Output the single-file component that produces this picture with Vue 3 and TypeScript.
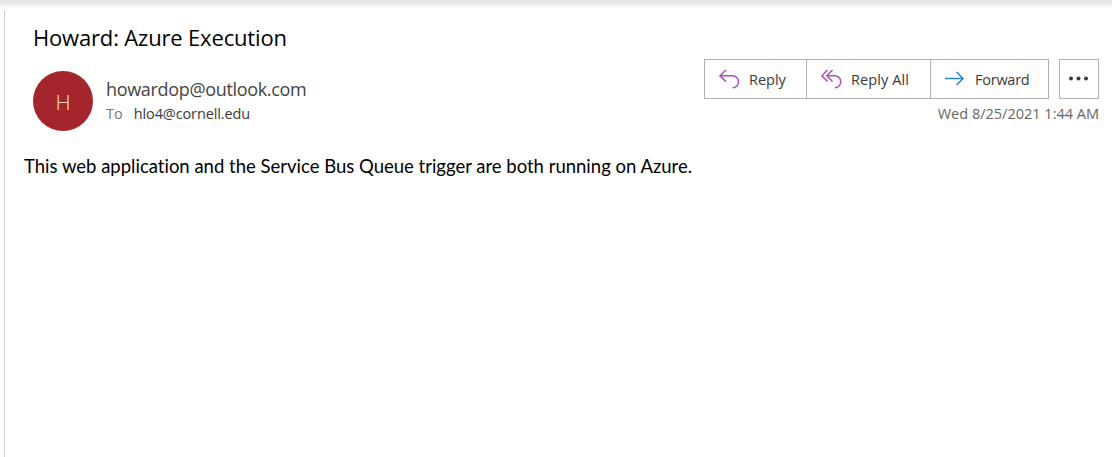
<script setup lang="ts">
interface MailAction {
  id: string
  label: string
  paths: string[]
}

const actions: MailAction[] = [
  { id: 'reply', label: 'Reply', paths: ['M7 1 L1 6.8 L7 12.6', 'M1 6.8 H13.5 A6 6 0 0 1 13.5 18.8'] },
  {
    id: 'reply-all',
    label: 'Reply All',
    paths: ['M6.5 1 L.9 6.8 L6.5 12.6', 'M11.5 1 L5.9 6.8 L11.5 12.6', 'M6 6.8 H13.8 A6 6 0 0 1 13.8 18.8'],
  },
  { id: 'forward', label: 'Forward', paths: ['M0 9.5 H18', 'M11.5 3 L18 9.5 L11.5 16'] },
]

const mail = {
  subject: 'Howard: Azure Execution',
  sender: 'howardop@outlook.com',
  recipient: 'hlo4@cornell.edu',
  sent: 'Wed 8/25/2021 1:44 AM',
  body: 'This web application and the Service Bus Queue trigger are both running on Azure.',
}
</script>

<template>
  <div class="window">
    <div class="shade"></div>
    <main class="pane">
      <h1 class="subject"><span>{{ mail.subject }}</span></h1>
      <header class="header">
        <div class="avatar"><span>H</span></div>
        <div class="people">
          <div class="sender"><span>{{ mail.sender }}</span></div>
          <div class="recipient"><span class="to">To</span><span class="address">{{ mail.recipient }}</span></div>
        </div>
        <div class="side">
          <div class="toolbar">
            <div class="group">
              <button v-for="a in actions" :key="a.id" type="button" class="action" :class="a.id">
                <svg width="21" height="20" viewBox="0 0 21 20">
                  <path v-for="d in a.paths" :key="d" :d="d" />
                </svg>
                <span>{{ a.label }}</span>
              </button>
            </div>
            <button type="button" class="more" aria-label="More actions">
              <svg width="20" height="6" viewBox="0 0 20 6">
                <circle cx="2" cy="2.5" r="2" /><circle cx="9.5" cy="2.5" r="2" /><circle cx="17" cy="2.5" r="2" />
              </svg>
            </button>
          </div>
          <div class="date"><span>{{ mail.sent }}</span></div>
        </div>
      </header>
      <p class="body"><span>{{ mail.body }}</span></p>
    </main>
  </div>
</template>

<style>
body {
  margin: 0;
  background: #fff;
}
</style>

<style scoped>
.window {
  display: flex;
  flex-direction: column;
  height: 457px;
  overflow: hidden;
  background: #fff;
  font-family: "Open Sans", "Noto Sans", sans-serif;
  white-space: nowrap;
}
.shade {
  flex: none;
  height: 10px;
  background: linear-gradient(#e6e6e6 0, #e9e9e9 30%, #fff 90%);
}
.pane {
  flex: 1;
  margin-left: 4px;
  border-left: 1px solid #d2d0ce;
}
.subject {
  margin: 10px 0 0 28px;
  height: 34px;
  line-height: 34px;
  font-size: 22px;
  font-weight: 400;
  color: #000;
  letter-spacing: -0.17px;
}
.header {
  display: flex;
  margin: 5px 13px 0 28px;
  height: 76px;
}
.avatar {
  width: 60px;
  height: 60px;
  margin-top: 12px;
  border-radius: 50%;
  background: #a4262c;
  color: #f6dfc4;
  font-size: 21px;
  font-weight: 300;
  line-height: 62px;
  text-align: center;
}
.people {
  margin: 18px 0 0 13px;
}
.sender {
  height: 25px;
  line-height: 25px;
  font-size: 18px;
  letter-spacing: -0.33px;
  color: #444;
}
.recipient {
  display: flex;
  gap: 11px;
  height: 22px;
  line-height: 23px;
  font-size: 14.5px;
}
.to {
  color: #767676;
}
.address {
  letter-spacing: -0.12px;
  color: #3b3a39;
}
.side {
  margin-left: auto;
}
.toolbar {
  display: flex;
  gap: 10px;
}
.group {
  display: flex;
  box-sizing: border-box;
  height: 40px;
  border: 1px solid #b3b0ad;
}
button {
  margin: 0;
  padding: 0;
  background: #fff;
  font: inherit;
}
.action {
  display: flex;
  box-sizing: border-box;
  align-items: center;
  border: 0;
  font-size: 14.5px;
  color: #3b3a39;
}
.action + .action {
  border-left: 1px solid #b3b0ad;
}
.action svg {
  flex: none;
  margin-right: 9px;
  fill: none;
  stroke: #ac4fb8;
  stroke-width: 1.5;
}
.reply {
  width: 101px;
  padding-left: 14px;
}
.reply-all {
  width: 124px;
  padding-left: 14px;
  letter-spacing: 0.1px;
}
.forward {
  width: 118px;
  padding-left: 14px;
  letter-spacing: -0.25px;
}
.action.forward svg {
  stroke: #2488d0;
}
.more {
  display: flex;
  box-sizing: border-box;
  align-items: center;
  justify-content: center;
  width: 40px;
  height: 40px;
  border: 1px solid #b3b0ad;
  fill: #3b3a39;
}
.date {
  margin-top: 4px;
  height: 22px;
  line-height: 22px;
  text-align: right;
  font-size: 14.5px;
  color: #666;
}
.body {
  margin: 16px 0 0 19px;
  height: 30px;
  line-height: 30px;
  font-family: Lato, "Open Sans", sans-serif;
  font-size: 18.5px;
  font-variant-ligatures: none;
  color: #000;
}
</style>
